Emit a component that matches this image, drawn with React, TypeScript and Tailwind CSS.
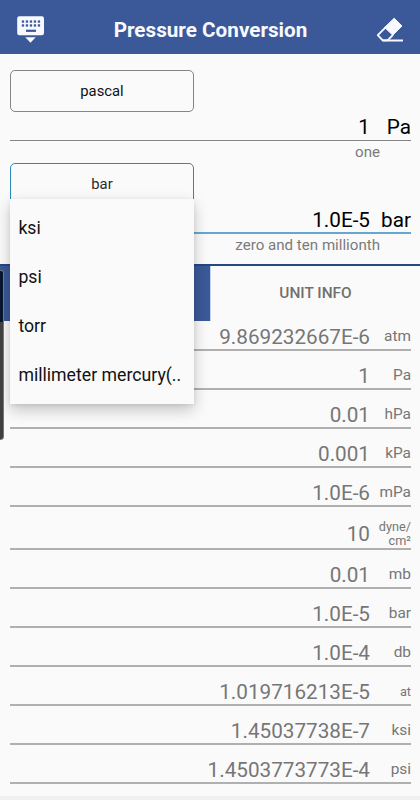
import { useState } from "react";

type Row = { value: string; unit: string; small?: boolean };

const ROWS: Row[] = [
  { value: "9.869232667E-6", unit: "atm" },
  { value: "1", unit: "Pa" },
  { value: "0.01", unit: "hPa" },
  { value: "0.001", unit: "kPa" },
  { value: "1.0E-6", unit: "mPa" },
  { value: "10", unit: "dyne/cm²", small: true },
  { value: "0.01", unit: "mb" },
  { value: "1.0E-5", unit: "bar" },
  { value: "1.0E-4", unit: "db" },
  { value: "1.019716213E-5", unit: "at", small: true },
  { value: "1.45037738E-7", unit: "ksi" },
  { value: "1.4503773773E-4", unit: "psi" },
];

const OPTIONS = ["ksi", "psi", "torr", "millimeter mercury(.."];

const KeyboardIcon = () => (
  <svg width="28" height="28" viewBox="0 0 28 28" fill="#f7f9ff">
    <rect x="0.2" y="0.2" width="26.8" height="19" rx="2.2" />
    <path d="M8.3 21.3h10.4l-5.2 5.4z" />
    {[5, 9, 13, 17, 21].map((x) => (
      <g key={x} fill="#3b5998">
        <rect x={x - 0.2} y="4.4" width="2.3" height="2.3" />
        <rect x={x - 0.2} y="8.3" width="2.3" height="2.3" />
      </g>
    ))}
    <rect x="9" y="13.7" width="10" height="2.2" fill="#3b5998" />
  </svg>
);

const EraserIcon = () => (
  <svg width="28" height="26" viewBox="0 0 28 26" fill="none">
    <path d="M18.2 1.2 26 9 16.8 18.2 8.6 10.4z" fill="#f7f9ff" stroke="#f7f9ff" strokeLinejoin="round" />
    <path d="M9.6 10.3 1.8 18.1 6.7 23.4 11.8 23.2 17 17.8" stroke="#f7f9ff" strokeWidth="1.9" strokeLinejoin="round" />
    <path d="M6.5 23.5H27" stroke="#f7f9ff" strokeWidth="2" />
  </svg>
);

const App = () => {
  const [open, setOpen] = useState(true);
  const [unit, setUnit] = useState("bar");

  return (
    <div className="relative flex h-[800px] w-[420px] flex-col overflow-hidden bg-[#fafafa] font-['Roboto',sans-serif] text-black">
      <header className="flex h-[54px] shrink-0 items-center justify-between bg-[#3b5998] pr-[16px] pl-[17px] pt-[6px]">
        <button><KeyboardIcon /></button>
        <h1 className="text-[20.7px] leading-6 font-bold text-[#f7f9ff]">Pressure Conversion</h1>
        <button><EraserIcon /></button>
      </header>

      <section className="flex h-[210px] shrink-0 flex-col pr-[9px] pl-[10px] pt-[16px]">
        <button className="h-[42px] w-[184px] rounded-[5px] border border-[#858585] text-[14.8px] text-[#111]">pascal</button>
        <div className="flex h-[29px] items-end justify-end border-b border-[#858585] text-[20.7px] leading-[26px]">
          <span>1</span>
          <span className="w-[41px] text-right">Pa</span>
        </div>
        <p className="h-[22px] pr-[31px] text-right text-[15.1px] leading-[22px] text-[#7a7a7a]">one</p>

        <div className="relative flex h-[36px] w-[184px]">
          <button
            className="h-[42px] w-[184px] shrink-0 rounded-[5px] border border-[#2b8ab5] text-[14.8px] text-[#2a2a2a]"
            onClick={() => setOpen(!open)}
          >
            {unit}
          </button>
          {open && (
            <ul className="absolute top-[36px] left-0 z-10 h-[205px] w-[184px] bg-[#fafafa] pt-[4.4px] shadow-[0_6px_14px_rgba(0,0,0,0.22),0_1px_4px_rgba(0,0,0,0.08)]">
              {OPTIONS.map((o) => (
                <li
                  key={o}
                  className="flex h-[49.2px] items-center pl-[8.4px] text-[17.7px] text-[#111] whitespace-nowrap"
                  onClick={() => {
                    setUnit(o);
                    setOpen(false);
                  }}
                >
                  {o}
                </li>
              ))}
            </ul>
          )}
        </div>
        <div className="flex h-[35px] items-end justify-end border-b-2 border-[#65a8cf] text-[20.7px] leading-[24px]">
          <span>1.0E-5</span>
          <span className="w-[41px] text-right">bar</span>
        </div>
        <p className="pr-[31px] text-right text-[15.1px] leading-[22px] text-[#7a7a7a]">zero and ten millionth</p>
      </section>

      <nav className="flex h-[57px] shrink-0 border-t-2 border-[#26477f]">
        <button className="w-[210px] bg-[#3b5998]" />
        <button className="flex-1 border-l border-[#c3d3f3] pt-px text-[15.4px] font-medium text-[#707070]">UNIT INFO</button>
      </nav>

      <main className="h-[475px] shrink-0 pr-[9px] pl-[10px]">
        {ROWS.map((r, i) => (
          <div
            key={r.unit}
            className={`flex items-end justify-end border-b-2 border-[#b0b0b0] text-[#767676] ${
              i === 0 ? "h-[30px]" : r.unit === "dyne/cm²" ? "h-[43px]" : "h-[39px]"
            }`}
          >
            <span className={`text-[20.7px] leading-[24px] ${r.unit === "dyne/cm²" ? "mb-[2px]" : ""}`}>{r.value}</span>
            <span
              className={`w-[41px] text-right ${
                r.unit === "dyne/cm²" ? "text-[12.7px] leading-[14px]" : r.small ? "text-[12.7px] leading-[24px]" : "text-[15.4px] leading-[25px]"
              }`}
            >
              {r.unit === "dyne/cm²" ? <>dyne/<br />cm²</> : r.unit}
            </span>
          </div>
        ))}
      </main>
      <footer className="flex-1 bg-[#f1f1f1]" />

      {/* edge panel handle */}
      <div className="absolute top-[270px] -left-[4px] z-20 h-[170px] w-[8px] rounded-[3px] border border-[#777] bg-[linear-gradient(#07152f_0_51px,#404040_51px)]" />
    </div>
  );
};

export default App;
